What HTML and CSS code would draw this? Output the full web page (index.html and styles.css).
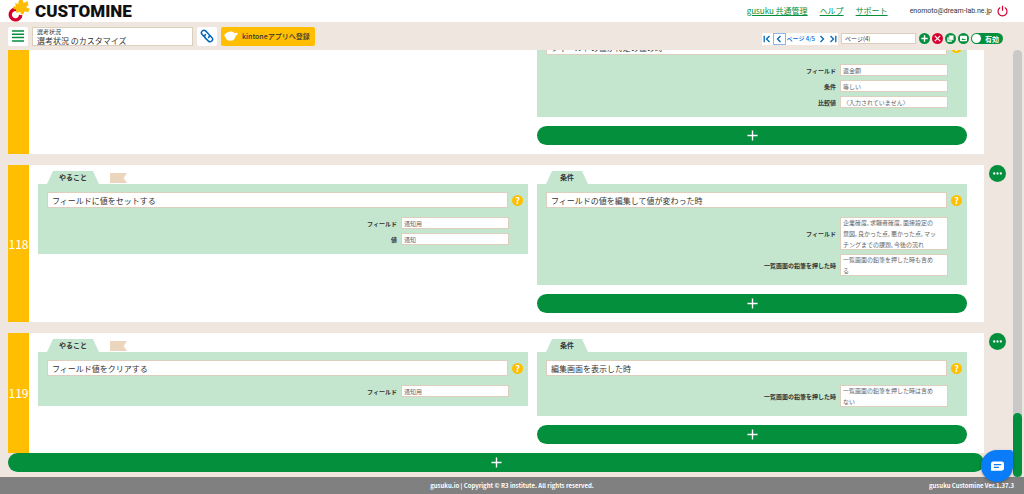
FILE: index.html
```html
<!DOCTYPE html>
<html lang="ja">
<head>
<meta charset="utf-8">
<title>選考状況 のカスタマイズ</title>
<link rel="stylesheet" href="styles.css">
</head>
<body>
<header class="header">
  <div class="brand">
    <svg class="brand-mark" viewBox="0 0 22 22" aria-hidden="true">
      <path d="M9 9.500A5.300 5.300 0 1 0 12.800 15" fill="none" stroke="#d7002d" stroke-width="3.400"/>
      <path d="M7 3l3.500 1.200C10 1.500 11-.5 13-.5S15.500 1.500 15.300 3.300L19.500 1l1 4.500c-1.500 0-2.300.8-2 1.700s1.600 1.300 3 .8L20.500 12l-4.500-.5c.4 1.800-.5 3-1.800 3s-2-1.200-1.700-3L8.500 13l-.6-3.700c-1.700.4-2.700-.3-2.700-1.500S6.300 6 8 6.500z" fill="#fdbc00"/>
      <circle cx="8" cy="15.500" r="1.800" fill="#fff"/>
    </svg>
    <span class="brand-name">CUSTOMINE</span>
  </div>
  <nav class="nav">
    <a href="#">gusuku 共通管理</a>
    <a href="#">ヘルプ</a>
    <a href="#">サポート</a>
  </nav>
  <span class="account">enomoto@dream-lab.ne.jp</span>
  <button class="power" aria-label="ログアウト">
    <svg viewBox="0 0 12 12"><path d="M3.500 2.200a4.900 4.900 0 1 0 5 0M6 .3v5.500" fill="none" stroke="#d7002d" stroke-width="1.300"/></svg>
  </button>
</header>

<div class="toolbar">
  <button class="tile" aria-label="メニュー">
    <svg viewBox="0 0 12 12"><path d="M0 1h12M0 4.300h12M0 7.600h12M0 11h12" stroke="#048f3c" stroke-width="1.500"/></svg>
  </button>
  <div class="title-box">
    <label for="title">選考状況</label>
    <input id="title" value="選考状況 のカスタマイズ">
  </div>
  <button class="tile" aria-label="リンク">
    <svg viewBox="0 0 14 14"><g fill="none" stroke="#0067c0" stroke-width="1.500" stroke-linecap="round"><path d="M8.600 8.400a2.500 2.500 0 0 0 0-3.500L5.800 2.100A2.500 2.500 0 0 0 2.200 5.600L4 7.400"/><path d="M5.400 5.600a2.500 2.500 0 0 0 0 3.500l2.800 2.800a2.500 2.500 0 0 0 3.600-3.500L10 6.600"/></g></svg>
  </button>
  <button class="register">
    <svg viewBox="0 0 15 12" aria-hidden="true"><path d="M2.500 2.700C4 1.500 5.500 2 6.500 1.200 8 .2 9 1.500 10.300 2.200c1.200.5 1.800.9 2.700.3.900-.4 1.700.5 1.500 1.500-.3 1-1.700 1-2.200 2.200-.4 2.500-2.200 5-5.300 5C3.500 11.200 2 9 1.800 7 .3 6.500-.2 4.500 1 4c.6-.3 1-.7 1.500-1.300z" fill="#fff"/></svg>
    kintoneアプリへ登録
  </button>
  <div class="paging">
    <div class="pager">
      <button aria-label="最初のページ"><svg viewBox="0 0 8 8"><path d="M1.200.8v6.400M6.500 1L3.500 4l3 3"/></svg></button>
      <button class="focused" aria-label="前のページ"><svg viewBox="0 0 8 8"><path d="M5.500 1l-3 3 3 3"/></svg></button>
      <span class="page-count">ページ 4/5</span>
      <button aria-label="次のページ"><svg viewBox="0 0 8 8"><path d="M2.500 1l3 3-3 3"/></svg></button>
      <button aria-label="最後のページ"><svg viewBox="0 0 8 8"><path d="M6.800.8v6.400M1.500 1l3 3-3 3"/></svg></button>
    </div>
    <input class="page-name" aria-label="ページ名" value="ページ(4)">
    <div class="page-tools">
      <button class="round" aria-label="ページを追加"><svg viewBox="0 0 11 11"><path d="M5.500 2.300v6.400M2.300 5.500h6.400" stroke="#fff" stroke-width="1.400"/></svg></button>
      <button class="round danger" aria-label="ページを削除"><svg viewBox="0 0 11 11"><path d="M2.800 2.800l5.400 5.400M8.200 2.800L2.800 8.200" stroke="#fff" stroke-width="1.200"/></svg></button>
      <button class="round" aria-label="ページを複製"><svg viewBox="0 0 11 11"><path d="M2.300 4.300h4.500v4.500H2.300z" fill="#fff"/><path d="M3.800 2.200h5v5h-5z" fill="#fff" stroke="#048f3c" stroke-width=".5"/></svg></button>
      <button class="round" aria-label="メモ"><svg viewBox="0 0 11 11"><rect x="2" y="2.800" width="7" height="5.400" rx=".8" fill="#fff"/><path d="M3.300 7l1.500-1.700L6 6.500l1-.8L8 7z" fill="#048f3c"/></svg></button>
      <label class="toggle"><input type="checkbox">有効</label>
    </div>
  </div>
</div>

<div class="workspace">
<main class="list">
  <div class="row">
    <article class="card">
      <div class="number"></div>
      <div class="panels">
        <section class="action"></section>
        <section>
          <h2 class="tab">条件</h2>
          <div class="panel">
            <div class="head"><input aria-label="条件" readonly value="フィールドの値が特定の値の時"><button class="help" aria-label="説明">?</button></div>
            <div class="fields">
              <label for="a1">フィールド</label><input id="a1" readonly value="返金額">
              <label for="a2">条件</label><input id="a2" readonly value="等しい">
              <label for="a3">比較値</label><input id="a3" readonly value="〈入力されていません〉">
            </div>
          </div>
          <button class="add" aria-label="条件を追加"><svg viewBox="0 0 12 12"><path d="M6 .5v11M.5 6h11"/></svg></button>
        </section>
      </div>
    </article>
    <button class="more" aria-label="操作"><svg viewBox="0 0 18 18"><g fill="#fff"><circle cx="5.500" cy="9" r="1.200"/><circle cx="9" cy="9" r="1.200"/><circle cx="12.500" cy="9" r="1.200"/></g></svg></button>
  </div>

  <div class="row">
    <article class="card">
      <div class="number">118</div>
      <div class="panels">
        <section class="action">
          <div class="tabs"><h2 class="tab">やること</h2><span class="flag"></span></div>
          <div class="panel">
            <div class="head"><input aria-label="やること" readonly value="フィールドに値をセットする"><button class="help" aria-label="説明">?</button></div>
            <div class="fields">
              <label for="b1">フィールド</label><input id="b1" readonly value="通知用">
              <label for="b2">値</label><input id="b2" readonly value="通知">
            </div>
          </div>
        </section>
        <section>
          <h2 class="tab">条件</h2>
          <div class="panel">
            <div class="head"><input aria-label="条件" readonly value="フィールドの値を編集して値が変わった時"><button class="help" aria-label="説明">?</button></div>
            <div class="fields">
              <label for="b3">フィールド</label><textarea id="b3" rows="3" readonly>企業確度, 求職者確度, 面接設定の
意図, 良かった点, 悪かった点, マッ
チングまでの課題, 今後の流れ</textarea>
              <label for="b4">一覧画面の鉛筆を押した時</label><textarea id="b4" rows="2" readonly>一覧画面の鉛筆を押した時も含め
る</textarea>
            </div>
          </div>
          <button class="add" aria-label="条件を追加"><svg viewBox="0 0 12 12"><path d="M6 .5v11M.5 6h11"/></svg></button>
        </section>
      </div>
    </article>
    <button class="more" aria-label="操作"><svg viewBox="0 0 18 18"><g fill="#fff"><circle cx="5.500" cy="9" r="1.200"/><circle cx="9" cy="9" r="1.200"/><circle cx="12.500" cy="9" r="1.200"/></g></svg></button>
  </div>

  <div class="row">
    <article class="card">
      <div class="number">119</div>
      <div class="panels">
        <section class="action">
          <div class="tabs"><h2 class="tab">やること</h2><span class="flag"></span></div>
          <div class="panel">
            <div class="head"><input aria-label="やること" readonly value="フィールド値をクリアする"><button class="help" aria-label="説明">?</button></div>
            <div class="fields">
              <label for="c1">フィールド</label><input id="c1" readonly value="通知用">
            </div>
          </div>
        </section>
        <section>
          <h2 class="tab">条件</h2>
          <div class="panel">
            <div class="head"><input aria-label="条件" readonly value="編集画面を表示した時"><button class="help" aria-label="説明">?</button></div>
            <div class="fields">
              <label for="c2">一覧画面の鉛筆を押した時</label><textarea id="c2" rows="2" readonly>一覧画面の鉛筆を押した時は含め
ない</textarea>
            </div>
          </div>
          <button class="add" aria-label="条件を追加"><svg viewBox="0 0 12 12"><path d="M6 .5v11M.5 6h11"/></svg></button>
        </section>
      </div>
    </article>
    <button class="more" aria-label="操作"><svg viewBox="0 0 18 18"><g fill="#fff"><circle cx="5.500" cy="9" r="1.200"/><circle cx="9" cy="9" r="1.200"/><circle cx="12.500" cy="9" r="1.200"/></g></svg></button>
  </div>
  <button class="add add-row" aria-label="アクションを追加"><svg viewBox="0 0 12 12"><path d="M6 .5v11M.5 6h11"/></svg></button>
</main>
<div class="scroll"><div class="thumb"></div></div>
</div>

<footer class="footer">
  <span class="copyright">gusuku.io | Copyright © R3 institute. All rights reserved.</span>
  <span class="version">gusuku Customine Ver.1.37.3</span>
</footer>
<button class="chat" aria-label="チャット"><svg viewBox="0 0 14 11"><path d="M2.500 0h9A2.500 2.500 0 0 1 14 2.500v5a2.500 2.500 0 0 1-2.500 2.500H0V2.500A2.500 2.500 0 0 1 2.500 0z" fill="#fff"/><path d="M3 3.500h8M3 6.500h5.500" stroke="#0a7cf8" stroke-width="1.200"/></svg></button>
</body>
</html>
```

FILE: styles.css
```css
:root {
  --green: #048f3c;
  --mint: #c4e6cf;
  --yellow: #ffbf00;
  --sand: #efe6e0;
  --line: #dccfbd;
}
* { box-sizing: border-box; }
body {
  margin: 0;
  height: 100vh;
  display: flex;
  flex-direction: column;
  background: var(--sand);
  color: #333;
  font-family: "Noto Sans CJK JP", sans-serif;
  font-size: 8px;
  line-height: 12px;
}
button, input, textarea { font: inherit; color: inherit; border: 0; margin: 0; padding: 0; }
button { display: flex; align-items: center; justify-content: center; flex: none; cursor: pointer; }
input, textarea { outline: 0; border-radius: 0; }
svg { display: block; }

.header {
  flex: none;
  height: 22px;
  display: flex;
  align-items: center;
  padding: 0 16px 0 8px;
  background: #fff;
}
.brand { display: flex; align-items: center; gap: 5px; margin-right: auto; }
.brand-mark { width: 22px; height: 22px; }
.brand-name { font: 900 17px/20px Roboto, sans-serif; color: #111; }
.nav { display: flex; gap: 12px; }
.nav a { color: var(--green); text-underline-offset: 1px; }
.account { margin: 0 5px 0 22px; font-family: Roboto, sans-serif; font-size: 7px; }
.power { background: none; }
.power svg { width: 11px; height: 12px; }

.toolbar {
  flex: none;
  height: 28px;
  display: flex;
  align-items: center;
  gap: 4px;
  padding: 0 21px 0 8px;
}
.tile { width: 20px; height: 19px; background: #fff; border-radius: 2px; }
.tile svg { width: 14px; height: 14px; }
.tile:first-child svg { width: 12px; height: 12px; }
.title-box {
  width: 161px;
  height: 19px;
  display: flex;
  flex-direction: column;
  padding-left: 4px;
  background: #fff;
  border: 1px solid var(--line);
}
.title-box label { font-size: 6px; line-height: 7px; }
.title-box input { height: 11px; line-height: 11px; background: none; width: 100%; }
.register { height: 19px; gap: 4px; padding: 0 5px 0 3px; background: var(--yellow); border-radius: 2px; font-size: 7px; font-weight: 500; }
.register svg { width: 14px; height: 12px; }
.paging { display: flex; align-items: center; gap: 3px; margin-left: auto; padding-top: 5px; }
.pager { display: flex; align-items: center; height: 12px; background: #fff; color: #0067e0; font-size: 6px; font-weight: 500; }
.pager button { width: 11px; height: 12px; background: #fff; }
.pager svg { flex: none; width: 8px; height: 8px; fill: none; stroke: #0067b5; stroke-width: 1.300; }
.pager .focused { width: 13px; border: 1px solid #8fb6ec; }
.page-count { padding: 0 1px; }
.page-name { width: 75px; height: 11px; padding-left: 3px; background: #fff; border: 1px solid var(--line); font-size: 6px; }
.page-tools { display: flex; align-items: center; gap: 2px; }
.round { width: 11px; height: 11px; border-radius: 50%; background: var(--green); }
.round svg { width: 11px; height: 11px; }
.danger { background: #d7002d; }
.toggle {
  display: flex;
  align-items: center;
  gap: 4px;
  height: 11px;
  padding: 0 4px 0 1px;
  border-radius: 6px;
  background: var(--green);
  color: #fff;
  font-size: 7px;
  font-weight: 700;
}
.toggle input { appearance: none; width: 9px; height: 9px; border-radius: 50%; background: #fff; }

.workspace { flex: 1; min-height: 0; display: flex; padding-right: 2px; }
.list {
  flex: 1;
  min-width: 0;
  overflow: hidden;
  display: flex;
  flex-direction: column;
  justify-content: flex-end;
  padding: 0 7px 5px 8px;
}
.row { flex: none; display: flex; align-items: flex-start; gap: 5px; }
.row + .row { margin-top: 11px; }
.card { flex: 1; display: flex; background: #fff; }
.number {
  width: 21px;
  flex: none;
  display: flex;
  align-items: center;
  justify-content: center;
  background: var(--yellow);
  color: #fff;
  font-size: 12px;
}
.panels { flex: 1; display: grid; grid-template-columns: 49fr 43fr; gap: 9px; padding: 6px 17px 9px 9px; }
.tabs { display: flex; gap: 11px; }
.tab {
  width: max-content;
  height: 13px;
  margin: 0 0 0 9px;
  padding: 0 12px;
  background: var(--mint);
  clip-path: polygon(6px 0, calc(100% - 6px) 0, 100% 100%, 0 100%);
  font-size: 7px;
  line-height: 13px;
  font-weight: 700;
}
section:not(.action) .tab { padding: 0 14px; }
.flag {
  width: 17px;
  height: 10px;
  margin-top: 2px;
  background: #ebd6bd;
  clip-path: polygon(0 0, 100% 0, 80% 50%, 100% 100%, 0 100%);
}
.panel { padding: 8px 5px 9px 9px; background: var(--mint); }
.head { display: flex; align-items: center; gap: 4px; }
.head input { flex: 1; min-width: 0; height: 16px; padding: 0 4px; background: #fff; border: 1px solid var(--line); }
.help { width: 11px; height: 11px; border-radius: 50%; background: var(--yellow); color: #fff; font-size: 9px; font-weight: 700; line-height: 11px; }
.fields {
  display: grid;
  grid-template-columns: 1fr 108px;
  align-items: center;
  gap: 4px;
  margin: 9px 14px 0 0;
  font-size: 6px;
  line-height: 11px;
}
.fields label { text-align: right; font-weight: 700; }
.fields input, .fields textarea {
  display: block;
  width: 100%;
  padding: 0 3px;
  background: #fff;
  box-shadow: inset 0 0 0 1px var(--line);
  color: #666;
}
.fields input { height: 12px; }
.fields textarea { resize: none; overflow: hidden; white-space: pre; }
.add { width: 100%; height: 19px; margin-top: 9px; border-radius: 10px; background: var(--green); }
.add svg { width: 11px; height: 11px; stroke: #fff; stroke-width: 1.500; }
.add-row { width: calc(100% - 22px); margin-top: 0; }
.more { width: 17px; height: 17px; border-radius: 50%; background: var(--green); }
.more svg { width: 17px; height: 17px; }
.scroll { width: 9px; display: flex; align-items: flex-end; background: #c9c9c9; border-radius: 5px 5px 0 0; }
.thumb { width: 100%; height: 15%; border-radius: 5px; background: var(--green); }

.footer {
  flex: none;
  height: 17px;
  display: grid;
  grid-template-columns: 1fr auto 1fr;
  align-items: center;
  padding: 0 10px;
  background: #808080;
  color: #fff;
  font-size: 6px;
  font-weight: 700;
}
.copyright { grid-column: 2; }
.version { text-align: right; }
.chat {
  position: fixed;
  right: 11px;
  bottom: 12px;
  width: 32px;
  height: 32px;
  border-radius: 16px 3px 16px 16px;
  background: #0a7cf8;
  box-shadow: 0 1px 3px rgba(0, 0, 0, .3);
}
.chat svg { width: 13px; height: 11px; }
```
